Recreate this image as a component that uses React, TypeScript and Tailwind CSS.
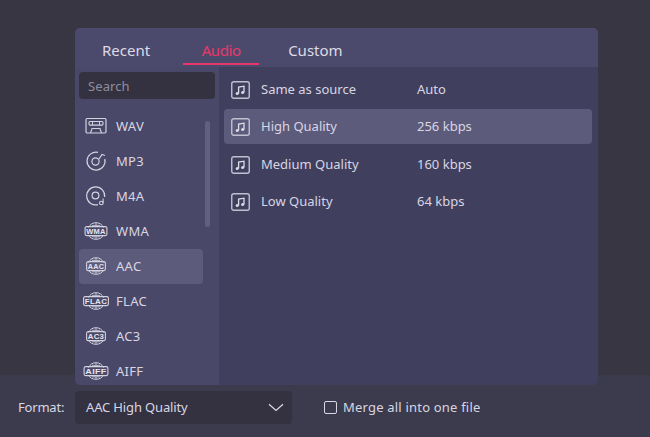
const font = "[font-family:'Noto_Sans',sans-serif]";

function MusicIcon() {
  return (
    <svg width="19" height="18" viewBox="0 0 19 18" fill="none" className="shrink-0">
      <rect x="0.75" y="0.75" width="17.5" height="16.5" rx="2" stroke="#c2c0d0" strokeWidth="1.4" />
      <path d="M7.6 12.4V6L13 5.2V11.4" stroke="#dddbe6" strokeWidth="1.3" />
      <circle cx="6.2" cy="12.4" r="1.5" fill="#dddbe6" />
      <circle cx="11.6" cy="11.5" r="1.5" fill="#dddbe6" />
    </svg>
  );
}

function WavIcon() {
  return (
    <svg width="22" height="18" viewBox="0 0 22 18" fill="none">
      <rect x="1" y="1.5" width="20" height="14.5" rx="1.2" stroke="#d4d2df" strokeWidth="1.2" />
      <rect x="4" y="4.5" width="14" height="3.6" rx="1" stroke="#d4d2df" strokeWidth="1.1" />
      <path d="M7.5 4.5V8M14.5 4.5V8" stroke="#d4d2df" />
      <path d="M5.5 16L7 11.5H15L16.5 16" stroke="#d4d2df" strokeWidth="1.1" />
    </svg>
  );
}

function Mp3Icon() {
  return (
    <svg width="22" height="22" viewBox="0 0 22 22" fill="none">
      <path d="M13 2.3A9 9 0 1 0 19.8 9" stroke="#d4d2df" strokeWidth="1.2" />
      <circle cx="10.5" cy="11.5" r="3.6" stroke="#d4d2df" strokeWidth="1.2" />
      <path d="M14 9L17 4.5L20 5.5" stroke="#d4d2df" strokeWidth="1.2" />
    </svg>
  );
}

function M4aIcon() {
  return (
    <svg width="22" height="22" viewBox="0 0 22 22" fill="none">
      <path d="M13 19.6A9 9 0 1 1 19.6 12" stroke="#d4d2df" strokeWidth="1.2" />
      <circle cx="10.5" cy="10.5" r="3.4" stroke="#d4d2df" strokeWidth="1.2" />
      <circle cx="16.3" cy="18" r="1.8" stroke="#d4d2df" strokeWidth="1.1" />
      <path d="M18.1 18V13.5" stroke="#d4d2df" strokeWidth="1.1" />
    </svg>
  );
}

function BadgeIcon({ label, width = 26 }: { label: string; width?: number }) {
  const x = (28 - width) / 2;
  return (
    <svg width="28" height="18" viewBox="0 0 28 18" fill="none">
      <path d="M6.5 5.5C8 2.5 10.5 0.7 14 0.7S20 2.5 21.5 5.5" stroke="#d4d2df" strokeWidth="1" />
      <path d="M6.5 13C8 15.8 10.5 17.3 14 17.3S20 15.8 21.5 13" stroke="#d4d2df" strokeWidth="1" />
      <path d="M10 3.4H18M10 14.8H18M14 1V3.4M14 14.8V17" stroke="#d4d2df" strokeWidth="0.8" />
      <rect x={x + 0.6} y="4.6" width={width - 1.2} height="9" rx="1.5" stroke="#d4d2df" strokeWidth="1.1" />
      <text
        x="14"
        y="12"
        textAnchor="middle"
        fontSize="8"
        fontWeight="700"
        fill="#e6e4ee"
        fontFamily="'Liberation Sans', sans-serif"
        textLength={width - 3.5}
        lengthAdjust="spacingAndGlyphs"
      >
        {label}
      </text>
    </svg>
  );
}

const formats = [
  { name: "WAV", icon: <WavIcon /> },
  { name: "MP3", icon: <Mp3Icon /> },
  { name: "M4A", icon: <M4aIcon /> },
  { name: "WMA", icon: <BadgeIcon label="WMA" width={23} /> },
  { name: "AAC", icon: <BadgeIcon label="AAC" width={20} />, active: true },
  { name: "FLAC", icon: <BadgeIcon label="FLAC" width={26} /> },
  { name: "AC3", icon: <BadgeIcon label="AC3" width={20} /> },
  { name: "AIFF", icon: <BadgeIcon label="AIFF" width={25} /> },
];

const qualities = [
  { name: "Same as source", rate: "Auto", box: "h-[37px]" },
  { name: "High Quality", rate: "256 kbps", active: true, box: "mt-[1px] h-[35px] pt-[1px]" },
  { name: "Medium Quality", rate: "160 kbps", box: "mt-[2px] h-[37px]" },
  { name: "Low Quality", rate: "64 kbps", box: "h-[37px]" },
];

export default function App() {
  return (
    <div className={`flex h-[437px] w-[650px] flex-col overflow-hidden bg-[#373642] ${font}`}>
      <div className="h-[375px] shrink-0 pl-[75px] pt-[28px]">
        <div className="relative z-10 flex h-[357px] w-[523px] flex-col overflow-hidden rounded-[5px] bg-[#413f5e]">
          <div className="flex h-[39px] shrink-0 items-start bg-[#4c4a6c] text-[15px] text-[#dddbe6]">
            <span className="ml-[27px] mt-[11px] leading-[22px]">Recent</span>
            <div className="ml-[33px] flex h-[37px] w-[76px] justify-center border-b-2 border-[#e8356a] pt-[11px] leading-[22px] tracking-[-0.4px] text-[#e8386a]">
              Audio
            </div>
            <span className="ml-[29px] mt-[11px] leading-[22px]">Custom</span>
          </div>
          <div className="flex min-h-0 flex-1">
            <div className="flex w-[144px] shrink-0 flex-col overflow-hidden bg-[#4a4868] pl-[4px]">
              <div className="mt-[5px] flex h-[27px] w-[136px] shrink-0 items-center rounded-[4px] bg-[#343240] pl-[9px] pt-[2px] text-[13px] tracking-[0.1px] text-[#8f8d9c]">
                Search
              </div>
              <div className="relative mt-[9.5px] flex w-[124px] flex-col">
                {formats.map((f) => (
                  <div
                    key={f.name}
                    className={`flex h-[35px] shrink-0 items-center rounded-[4px] text-[13px] tracking-[0.3px] text-[#d8d6e2] ${f.active ? "bg-[#5d5b7c]" : ""}`}
                  >
                    <span className="flex w-[37px] shrink-0 justify-center pr-[3px]">{f.icon}</span>
                    <span className="pt-[2px]">{f.name}</span>
                  </div>
                ))}
                <div className="absolute left-[126px] top-[12px] h-[106px] w-[5px] rounded-full bg-[#62607f]" />
              </div>
            </div>
            <div className="flex flex-1 flex-col pl-[5px] pr-[6px] pt-[4px]">
              {qualities.map((q) => (
                <div
                  key={q.name}
                  className={`flex ${q.box} items-center rounded-[4px] pl-[7px] text-[13px] text-[#d8d6e2] ${q.active ? "bg-[#5d5b7c]" : ""}`}
                >
                  <MusicIcon />
                  <span className="ml-[11px] w-[156px]">{q.name}</span>
                  <span>{q.rate}</span>
                </div>
              ))}
            </div>
          </div>
        </div>
      </div>
      <div className="flex flex-1 items-start bg-[#3c3b4d] pl-[18px] pt-[16px] text-[13px] text-[#d8d6e2]">
        <span className="w-[57px] leading-[33px] tracking-[-0.2px]">Format:</span>
        <div className="flex h-[33px] w-[217px] items-center justify-between rounded-[4px] bg-[#343240] pl-[11px] pr-[8px]">
          <span className="tracking-[-0.15px]">AAC High Quality</span>
          <svg width="16" height="9" viewBox="0 0 16 9" fill="none">
            <path d="M1 1.2L8 7.5L15 1.2" stroke="#d8d6e2" strokeWidth="1.3" />
          </svg>
        </div>
        <div className="ml-[32px] flex h-[33px] items-center">
          <span className="h-[13px] w-[13px] rounded-[2px] border border-[#d8d6e2]" />
          <span className="ml-[6px] tracking-[0.2px]">Merge all into one file</span>
        </div>
      </div>
    </div>
  );
}
